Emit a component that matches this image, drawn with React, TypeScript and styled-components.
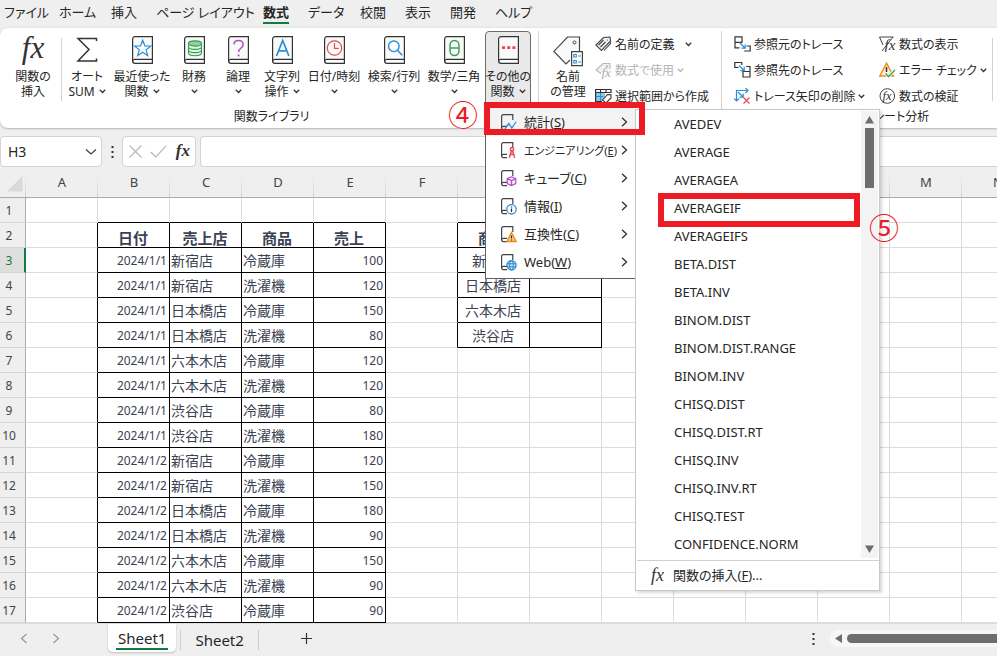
import React from "react";
import styled, { createGlobalStyle, css } from "styled-components";

const GREEN = "#107c41";
const RED = "#ed1c24";
const INK = "#262626";
const BLUE = "#2b8fd6";

const GlobalStyle = createGlobalStyle`
  *, *::before, *::after { box-sizing: border-box; }
  body {
    margin: 0;
    background: #efefef;
    color: ${INK};
    font-family: "Noto Sans", "Noto Sans CJK JP", sans-serif;
    font-size: 12px;
    line-height: 15px;
    overflow: hidden;
  }
  button, input {
    font: inherit;
    color: inherit;
    font-feature-settings: inherit;
    margin: 0;
    padding: 0;
    border: 0;
    background: none;
  }
  svg { display: block; flex: none; }
  ul { list-style: none; margin: 0; padding: 0; }
`;

const Page = styled.div`
  min-height: 100vh;
  display: flex;
  flex-direction: column;
  overflow: hidden;
  font-feature-settings: "palt";
`;

/* ---------- ribbon tabs ---------- */

const TabBar = styled.nav`
  display: flex;
  height: 27px;
  padding-left: 4px;
  font-size: 13px;
`;

const tabSizes = { s: 45, m: 52, l: 55, xl: 107 };

const Tab = styled.button<{ $size: keyof typeof tabSizes; $active?: boolean }>`
  width: ${(p) => tabSizes[p.$size]}px;
  text-align: left;
  white-space: nowrap;
  line-height: 20px;
  padding-bottom: 1px;
  span {
    display: inline-block;
    border-bottom: 2px solid transparent;
  }
  ${(p) =>
    p.$active &&
    css`
      font-weight: 700;
      span {
        border-color: ${GREEN};
      }
    `}
`;

/* ---------- ribbon ---------- */

const Ribbon = styled.section`
  display: flex;
  min-height: 101px;
  padding: 3px 0 3px 5px;
  background: #fff;
  border-top: 1px solid #e6e6e6;
  border-radius: 8px 0 0 8px;
  box-shadow: 0 1px 2px rgba(0, 0, 0, 0.25);
`;

const Group = styled.div<{ $divided?: boolean }>`
  display: flex;
  flex-direction: column;
  flex: none;
  position: relative;
  ${(p) =>
    p.$divided &&
    css`
      border-left: 1px solid #d1d1d1;
    `}
`;

const GroupBody = styled.div`
  display: flex;
  height: 78px;
`;

const GroupLabel = styled.div`
  text-align: center;
  line-height: 16px;
`;

const Divider = styled.span`
  width: 1px;
  margin: 7px 0 8px;
  background: #d1d1d1;
  flex: none;
`;

const bigSizes = { narrow: 44, mid: 50, wide: 60, fx: 56 };

const BigButton = styled.button<{ $size: keyof typeof bigSizes }>`
  width: ${(p) => bigSizes[p.$size]}px;
  flex: none;
  display: flex;
  flex-direction: column;
  align-items: center;
  padding-top: 5px;
  white-space: nowrap;
`;

const OpenButton = styled(BigButton)`
  width: 46px;
  height: 74px;
  padding-top: 4px;
  border: 1px solid #6b6b6b;
  border-radius: 4px 4px 0 0;
  background: #e9e9e9;
`;

const IconBox = styled.span`
  height: 33px;
  display: flex;
  align-items: flex-start;
`;

const LabelLine = styled.span`
  display: flex;
  align-items: center;
  justify-content: center;
  gap: 4px;
  min-height: 15px;
`;

const SmallColumn = styled.div<{ $wide?: boolean }>`
  width: ${(p) => (p.$wide ? 145 : 113)}px;
  display: flex;
  flex-direction: column;
`;

const SmallButton = styled.button<{ $tight?: boolean }>`
  height: 26px;
  display: flex;
  align-items: center;
  gap: 3px;
  white-space: nowrap;
  &:disabled {
    color: #b4b4b4;
  }
  svg:last-child:not(:first-child) {
    margin-left: ${(p) => (p.$tight ? 0 : 7)}px;
  }
`;

const Serif = styled.span<{ $size: number }>`
  font-family: "Liberation Serif", serif;
  font-style: italic;
  font-size: ${(p) => p.$size}px;
  line-height: 0.8;
  color: #333;
`;

const BoldSerif = styled(Serif)`
  font-weight: 700;
`;

const LibraryEnd = styled.span`
  width: 7px;
`;

const NamePad = styled.div`
  display: flex;
  padding: 0 2px 0 4px;
`;

const NameEnd = styled.span`
  width: 13px;
`;

const TracePad = styled.div`
  display: flex;
  padding: 0 54px 0 12px;
`;

/* ---------- flyout menus ---------- */

const MenuAnchor = styled.div`
  position: relative;
  z-index: 10;
  width: 46px;
  height: 74px;
  margin-left: 1px;
`;

const Menu = styled.div`
  position: absolute;
  top: 73px;
  left: 0;
  width: 150px;
  padding: 3px 0 2px;
  background: #fff;
  border: 1px solid #606060;
  border-right: 0;
  font-size: 13px;
`;

const MenuItem = styled.li`
  position: relative;
  height: 28px;
`;

const MenuButton = styled.button<{ $hot?: boolean; $long?: boolean }>`
  width: 100%;
  height: 28px;
  display: flex;
  align-items: center;
  padding: 0 7px 0 14px;
  gap: 6px;
  white-space: nowrap;
  background: ${(p) => (p.$hot ? "#f3f3f3" : "transparent")};
  span {
    flex: 1;
    min-width: 0;
    text-align: left;
    font-size: ${(p) => (p.$long ? 11 : 13)}px;
  }
`;

const Submenu = styled.div`
  position: absolute;
  top: 4px;
  left: 149px;
  width: 245px;
  background: #fff;
  border: 1px solid #c8c8c8;
  box-shadow: 2px 2px 3px rgba(0, 0, 0, 0.16);
`;

const ScrollArea = styled.div`
  display: flex;
  padding: 0 1px 2px 0;
  margin: 0 0 0 1px;
  border-bottom: 1px solid #cfcfcf;
  ul {
    flex: 1;
  }
`;

const FunctionButton = styled.button`
  width: 100%;
  height: 28px;
  padding-left: 37px;
  text-align: left;
`;

const VScroll = styled.div`
  width: 17px;
  margin-top: 1px;
  padding: 5px 0;
  background: #f3f3f3;
  display: flex;
  flex-direction: column;
  align-items: center;
`;

const VThumb = styled.span`
  width: 9px;
  height: 60px;
  margin: 4px 0 auto;
  background: #6e6e6e;
`;

const InsertFunction = styled.button`
  width: 100%;
  height: 29px;
  display: flex;
  align-items: center;
  padding-left: 15px;
  gap: 9px;
`;

const Frame = styled.span<{ $wide?: boolean }>`
  position: absolute;
  z-index: 3;
  inset: ${(p) => (p.$wide ? "-6px -10px 1px -2px" : "-1px 1px -5px 21px")};
  border: 6px solid ${RED};
  pointer-events: none;
`;

const Callout = styled.span<{ $right?: boolean }>`
  position: absolute;
  z-index: 3;
  ${(p) => (p.$right ? "left: 231px; top: 17px;" : "left: -39px; top: -10px;")}
  width: 32px;
  text-align: center;
  font-family: "Noto Sans CJK JP", sans-serif;
  font-size: 30px;
  line-height: 30px;
  color: ${RED};
`;

/* ---------- formula bar ---------- */

const FormulaBar = styled.div`
  display: flex;
  height: 31px;
  margin-top: 8px;
`;

const Field = styled.div`
  display: flex;
  align-items: center;
  background: #fff;
  border: 1px solid #d2d2d2;
  border-radius: 4px;
`;

const NameField = styled(Field)`
  width: 102px;
  padding: 0 4px 0 7px;
  input {
    flex: 1;
    min-width: 0;
    font-size: 14px;
    outline: 0;
  }
`;

const ToolField = styled(Field)`
  width: 74px;
  padding: 0 5px 0 6px;
  justify-content: space-between;
`;

const FormulaField = styled(Field)`
  flex: 1;
  margin-left: 4px;
  border-right: 0;
  border-radius: 4px 0 0 4px;
  input {
    flex: 1;
    padding: 0 8px;
    outline: 0;
  }
`;

const Dots = styled.span`
  width: 20px;
  display: flex;
  align-items: center;
  justify-content: center;
`;

/* ---------- grid ---------- */

const GridArea = styled.div`
  overflow: hidden;
  background: #fff;
  font-feature-settings: normal;
`;

const Sheet = styled.table`
  table-layout: fixed;
  width: 1034px;
  min-width: 100%;
  border-collapse: separate;
  border-spacing: 0;
  color: #3b4252;
  col:first-child {
    width: 26px;
  }
`;

const ColumnHead = styled.th`
  height: 31px;
  padding: 0;
  font-size: 13px;
  font-weight: 400;
  color: #444;
  background: linear-gradient(#efefef, #cfcfcf) right 0 top 8px / 1px 22px no-repeat #efefef;
  border-bottom: 1px solid #ababab;
`;

const Corner = styled(ColumnHead)`
  padding: 4px 3px 0 7px;
`;

const RowHead = styled.th<{ $active?: boolean }>`
  height: 25px;
  padding: 0 7px 0 0;
  font-size: 12px;
  font-weight: 400;
  text-align: center;
  color: #444;
  background: #efefef;
  border-right: 1px solid #ababab;
  border-bottom: 1px solid #d6d6d6;
  ${(p) =>
    p.$active &&
    css`
      color: ${GREEN};
      background: #dedede;
      border-right: 2px solid ${GREEN};
      padding-right: 6px;
    `}
`;

const Cell = styled.td<{
  $right: boolean;
  $bottom: boolean;
  $align: "left" | "right" | "center";
  $head: boolean;
}>`
  height: 25px;
  padding: 0 2px 0 1px;
  overflow: hidden;
  white-space: nowrap;
  font-size: 12px;
  border-right: 1px solid ${(p) => (p.$right ? "#000" : "#dcdcdc")};
  border-bottom: 1px solid ${(p) => (p.$bottom ? "#000" : "#dcdcdc")};
  text-align: ${(p) => p.$align};
  ${(p) =>
    p.$align !== "right" &&
    css`
      font-size: 14px;
    `}
  ${(p) =>
    p.$head &&
    css`
      font-size: 15px;
      font-weight: 700;
      padding-top: 6px;
    `}
`;

/* ---------- sheet bar ---------- */

const SheetBar = styled.footer`
  display: flex;
  align-items: flex-start;
  height: 33px;
  font-size: 15px;
  border-top: 1px solid #dcdcdc;
`;

const SheetNav = styled.div`
  display: flex;
  width: 108px;
  padding: 9px 0 0 20px;
  gap: 24px;
`;

const SheetTab = styled.button<{ $active?: boolean }>`
  line-height: 20px;
  ${(p) =>
    p.$active
      ? css`
          height: 28px;
          padding: 2px 8px 0;
          background: #fff;
          border-radius: 0 0 5px 5px;
          box-shadow: 0 1px 2px rgba(0, 0, 0, 0.2);
          span {
            display: block;
            border-bottom: 2px solid ${GREEN};
            padding: 0 2px;
          }
        `
      : css`
          height: 20px;
          margin: 6px 0 0 4px;
          padding: 0 14px;
          border: solid #cfcfcf;
          border-width: 0 1px;
        `}
`;

const AddSheet = styled.button`
  margin: 9px 0 0 42px;
`;

const HScroll = styled.div`
  display: flex;
  align-items: center;
  width: 167px;
  height: 17px;
  margin-top: 6px;
  padding-left: 5px;
  gap: 5px;
  background: #f7f7f7;
  border-radius: 8px 0 0 8px;
`;

const HThumb = styled.span`
  flex: 1;
  height: 9px;
  border-radius: 5px 0 0 5px;
  background: #6e6e6e;
`;

const MoreTabs = styled(Dots)`
  margin: 9px 7px 0 auto;
`;

/* ---------- icons ---------- */

const Chevron = ({ color = "#333" }: { color?: string }) => (
  <svg width="7" height="5" viewBox="0 0 7 5" fill="none" stroke={color} strokeWidth="1.3">
    <path d="M.8.8 3.5 3.5 6.2.8" />
  </svg>
);

const VerticalDots = () => (
  <svg width="3" height="12" viewBox="0 0 3 12" fill="#333">
    <path d="M.5 0h2v2h-2zM.5 5h2v2h-2zM.5 10h2v2h-2z" />
  </svg>
);

const Book = ({ children }: { children?: React.ReactNode }) => (
  <svg width="21" height="28" viewBox="0 0 21 28" fill="none">
    <path d="M.6 25V3A2.4 2.4 0 0 1 3 .6h17.4v26.8H3A2.4 2.4 0 0 1 .6 25Z" fill="#fafafa" stroke="#333" strokeWidth="1.2" />
    <path d="M.6 25.4A2.2 2.2 0 0 1 3 23.4h17.4" stroke="#333" strokeWidth="1.2" />
    {children}
  </svg>
);

const StarBook = () => (
  <Book>
    <path d="m10.7 4.2 2.1 5.6 6 .3-4.7 3.7 1.6 5.8-5-3.3-5 3.3 1.6-5.8-4.7-3.7 6-.3z" fill="#fff" stroke={BLUE} strokeWidth="1.2" />
  </Book>
);

const CoinsBook = () => (
  <Book>
    <g stroke="#2f9e4f" strokeWidth="1.1" fill="#e4f5e6">
      <path d="M4.5 7.500v9.500c0 1.500 3 2.700 6.500 2.700s6.500-1.200 6.500-2.700V7.500" />
      <path d="M4.500 14c0 1.500 3 2.600 6.500 2.600s6.500-1.100 6.500-2.600M4.500 10.800c0 1.500 3 2.600 6.500 2.600s6.500-1.100 6.500-2.600" />
      <ellipse cx="11" cy="7.500" rx="6.500" ry="2.600" fill="#8fd19e" />
    </g>
  </Book>
);

const QuestionBook = () => (
  <Book>
    <path d="M6 8.500c0-2.500 2-4 4.600-4s4.600 1.600 4.600 3.900c0 3.600-4.600 3.600-4.600 7.600" stroke="#b04fc0" strokeWidth="1.500" />
    <circle cx="10.600" cy="19.500" r="1.100" fill="#b04fc0" />
  </Book>
);

const LetterBook = () => (
  <Book>
    <path d="M4.500 20 10.700 4.500 16.900 20M6.600 14.800h8.200" stroke={BLUE} strokeWidth="1.700" />
  </Book>
);

const ClockBook = () => (
  <Book>
    <circle cx="10.500" cy="12" r="7.200" stroke="#e8484e" strokeWidth="1.200" fill="#fff" />
    <path d="M10.500 7v5.300h4.300" stroke="#e8484e" strokeWidth="1.200" />
  </Book>
);

const SearchBook = () => (
  <Book>
    <circle cx="9.800" cy="10.300" r="5.300" stroke={BLUE} strokeWidth="1.400" fill="#fff" />
    <path d="m13.500 14.200 4.700 5" stroke={BLUE} strokeWidth="1.500" />
  </Book>
);

const ThetaBook = () => (
  <Book>
    <rect x="6" y="4.500" width="9" height="15" rx="4.500" stroke="#2f9e4f" strokeWidth="1.400" />
    <path d="M6 12h9" stroke="#2f9e4f" strokeWidth="1.400" />
  </Book>
);

const DotsBook = () => (
  <Book>
    <path d="M4 10.200h3v2.800H4zM9.200 10.200h3v2.800h-3zM14.400 10.200h3v2.800h-3z" fill="#ef4444" />
  </Book>
);

const Sigma = () => (
  <svg width="22" height="26" viewBox="0 0 22 26" fill="none" stroke="#333" strokeWidth="1.500">
    <path d="M20.500 5V2.500H2L13 13.500 2 25h18.500V22.500" />
  </svg>
);

const NameManager = () => (
  <svg width="30" height="31" viewBox="0 0 30 31" fill="none">
    <path d="M26.500 15V1H14.500L.9 15.400 13 28l4-4" fill="#fafafa" stroke="#444" strokeWidth="1.200" />
    <circle cx="21.500" cy="6.500" r="1.500" stroke="#444" />
    <path d="M18.600 15.600h10.800v14H18.600z" fill="#fff" stroke="#444" strokeWidth="1.200" />
    <path d="M20.800 18.500h2.500V21h-2.500zM20.800 24.500h2.500V27h-2.500zM25 20h3M25 26h3" stroke={BLUE} strokeWidth="1.100" />
  </svg>
);

const TagIcon = () => (
  <svg width="17" height="16" viewBox="0 0 17 16" fill="none" stroke="#444" strokeWidth="1.100">
    <path d="M8.500 1.500 15 1l.6 4L6.500 14.500.9 9z" fill="#eee" />
    <path d="m3.500 9 5-5M5.500 11l5-5M12.500 3.800v.8M15 5.500l.5 2L9 14.500" />
  </svg>
);

const UseInFormulaIcon = () => (
  <svg width="17" height="17" viewBox="0 0 17 17" fill="none" stroke="#b8b8b8" strokeWidth="1.100">
    <path d="M6 11.500 1 8l7-6.500h7V7" fill="#f2f2f2" />
    <circle cx="12" cy="4.500" r=".7" />
    <text x="6.500" y="15" fontFamily="Liberation Serif" fontStyle="italic" fontSize="13" fill="#aaa" stroke="none">fx</text>
  </svg>
);

const SelectionIcon = () => (
  <svg width="17" height="16" viewBox="0 0 17 16" fill="none">
    <path d="M1 4h9v9H1z" fill="#8ec7ee" />
    <path d="M1 8.500h7M5.500 4v9" stroke={BLUE} />
    <path d="M16 5V1.500H.6v12H7M.6 4.500H16M5.500 1.500v3M11 1.500v3" stroke="#333" strokeWidth="1.200" />
    <path d="m7.500 12 5-5.500 3.500.3v3.200L11 15z" fill="#fff" stroke="#333" strokeWidth="1.100" />
  </svg>
);

const PrecedentsIcon = () => (
  <svg width="17" height="16" viewBox="0 0 17 16" fill="none" stroke="#333" strokeWidth="1.200">
    <path d="M1 .8h7v5.500H1zM1 6.300v5.500h4.500M12.500 10h3.700v5h-6" />
    <path d="m5.500 6.500 5.500 5.500M11.200 8.500v3.700H7.500" stroke={BLUE} />
  </svg>
);

const DependentsIcon = () => (
  <svg width="17" height="16" viewBox="0 0 17 16" fill="none" stroke="#333" strokeWidth="1.200">
    <path d="M4.500 5.500H.8v-5h7V3M9 9.500h7V15H9zM12 4.500h4v5" />
    <path d="m5 3.500 5 5M10.200 4.800v3.900H6.300" stroke={BLUE} />
  </svg>
);

const RemoveArrowsIcon = () => (
  <svg width="17" height="16" viewBox="0 0 17 16" fill="none" stroke={BLUE} strokeWidth="1.200">
    <path d="M2.500 13V2.500H14M11.500 0 14 2.500 11.500 5M0 10.500 2.500 13 5 10.500M4 4l5 5M9.200 5.500v3.700H5.500" />
    <path d="m9.500 9.500 6 6M15.500 9.500l-6 6" stroke="#e8484e" />
  </svg>
);

const ShowFormulasIcon = () => (
  <svg width="17" height="16" viewBox="0 0 17 16" fill="none" stroke="#444" strokeWidth="1">
    <path d="M.5 1h14M.5 1 4 9M14 1 3 15" />
    <text x="5.500" y="13.500" fontFamily="Liberation Serif" fontStyle="italic" fontSize="15" fill="#333" stroke="none">fx</text>
  </svg>
);

const ErrorCheckIcon = () => (
  <svg width="17" height="16" viewBox="0 0 17 16" fill="none">
    <path d="M7.500 1.200 14.500 14H.8z" fill="#fdf0d5" stroke="#ec8a1c" strokeWidth="1.400" />
    <path d="M7.500 5v5M7.500 11.500v1.200" stroke="#333" strokeWidth="1.500" />
    <path d="m6.500 11.500 3 3L16 8" stroke="#fff" strokeWidth="3" />
    <path d="m6.500 11.500 3 3L16 8" stroke="#2f9e4f" strokeWidth="1.300" />
  </svg>
);

const EvaluateIcon = () => (
  <svg width="17" height="16" viewBox="0 0 17 16" fill="none">
    <circle cx="8.300" cy="8" r="7.300" stroke="#444" />
    <text x="3.500" y="11.800" fontFamily="Liberation Serif" fontStyle="italic" fontSize="12.500" fill="#333">fx</text>
  </svg>
);

const MiniBook = ({ children }: { children?: React.ReactNode }) => (
  <svg width="18" height="18" viewBox="0 0 18 18" fill="none">
    <path d="M12.800 7V1.600H3.500c-1.200 0-1.900.7-1.900 1.900v11.200c0 1.200.7 1.900 1.900 1.900H7M1.600 15.200c0-1 .8-1.800 1.900-1.800H7" stroke="#444" strokeWidth="1.200" />
    {children}
  </svg>
);

const menuIcons: Record<string, React.ReactNode> = {
  stats: <path d="m4.800 16 4-5.500 3 4.500L16 9" stroke={BLUE} strokeWidth="1.300" />,
  engineering: (
    <g stroke="#e8484e" strokeWidth="1.500">
      <circle cx="12" cy="8.200" r="1.600" />
      <path d="m11.500 9.800-2.200 7M12.500 9.800l2.200 7M9.500 13.500h5" />
    </g>
  ),
  cube: (
    <path d="m11.500 7.800 4.300 1.800v5l-4.300 2-4.300-2v-5zM7.200 9.600l4.300 2 4.300-2M11.500 11.600v5" stroke="#b04fc0" strokeWidth="1.200" fill="#f7e9fa" />
  ),
  info: (
    <g>
      <circle cx="11.500" cy="12.300" r="4.700" stroke={BLUE} strokeWidth="1.300" fill="#fff" />
      <path d="M11.500 11.500V15M11.500 9.500v1" stroke="#333" strokeWidth="1.300" />
    </g>
  ),
  compat: (
    <g>
      <path d="m11.500 7.500 4.700 9H6.800z" fill="#fbc77d" stroke="#ec8a1c" strokeWidth="1.300" />
      <path d="M11.500 10.500v3M11.500 14.500v1" stroke="#333" strokeWidth="1.200" />
    </g>
  ),
  web: (
    <g stroke="#1f86d0">
      <circle cx="11.500" cy="12.300" r="4.600" fill="#cfe7f9" strokeWidth="1.200" />
      <path d="M7 10.800h9M7 13.800h9" />
      <ellipse cx="11.500" cy="12.300" rx="1.900" ry="4.600" />
    </g>
  ),
};

/* ---------- data ---------- */

const tabs: { label: string; size: keyof typeof tabSizes; active?: boolean }[] = [
  { label: "ファイル", size: "l" },
  { label: "ホーム", size: "m" },
  { label: "挿入", size: "s" },
  { label: "ページ レイアウト", size: "xl" },
  { label: "数式", size: "s", active: true },
  { label: "データ", size: "m" },
  { label: "校閲", size: "s" },
  { label: "表示", size: "s" },
  { label: "開発", size: "s" },
  { label: "ヘルプ", size: "m" },
];

const library: { icon: React.ReactNode; lines: [string, string]; size: keyof typeof bigSizes }[] = [
  { icon: <Sigma />, lines: ["オート", "SUM"], size: "mid" },
  { icon: <StarBook />, lines: ["最近使った", "関数"], size: "wide" },
  { icon: <CoinsBook />, lines: ["財務", ""], size: "narrow" },
  { icon: <QuestionBook />, lines: ["論理", ""], size: "narrow" },
  { icon: <LetterBook />, lines: ["文字列", "操作"], size: "narrow" },
  { icon: <ClockBook />, lines: ["日付/時刻", ""], size: "wide" },
  { icon: <SearchBook />, lines: ["検索/行列", ""], size: "wide" },
  { icon: <ThetaBook />, lines: ["数学/三角", ""], size: "wide" },
];

const categories = [
  { icon: "stats", name: "統計", key: "S" },
  { icon: "engineering", name: "エンジニアリング", key: "E" },
  { icon: "cube", name: "キューブ", key: "C" },
  { icon: "info", name: "情報", key: "I" },
  { icon: "compat", name: "互換性", key: "C" },
  { icon: "web", name: "Web", key: "W" },
];

const functions = [
  "AVEDEV", "AVERAGE", "AVERAGEA", "AVERAGEIF", "AVERAGEIFS", "BETA.DIST", "BETA.INV", "BINOM.DIST",
  "BINOM.DIST.RANGE", "BINOM.INV", "CHISQ.DIST", "CHISQ.DIST.RT", "CHISQ.INV", "CHISQ.INV.RT",
  "CHISQ.TEST", "CONFIDENCE.NORM",
];

const sales: [string, string, string, string][] = [
  ["日付", "売上店", "商品", "売上"],
  ["2024/1/1", "新宿店", "冷蔵庫", "100"],
  ["2024/1/1", "新宿店", "洗濯機", "120"],
  ["2024/1/1", "日本橋店", "冷蔵庫", "150"],
  ["2024/1/1", "日本橋店", "洗濯機", "80"],
  ["2024/1/1", "六本木店", "冷蔵庫", "120"],
  ["2024/1/1", "六本木店", "洗濯機", "120"],
  ["2024/1/1", "渋谷店", "冷蔵庫", "80"],
  ["2024/1/1", "渋谷店", "洗濯機", "180"],
  ["2024/1/2", "新宿店", "冷蔵庫", "120"],
  ["2024/1/2", "新宿店", "洗濯機", "150"],
  ["2024/1/2", "日本橋店", "冷蔵庫", "180"],
  ["2024/1/2", "日本橋店", "洗濯機", "90"],
  ["2024/1/2", "六本木店", "冷蔵庫", "150"],
  ["2024/1/2", "六本木店", "洗濯機", "90"],
  ["2024/1/2", "渋谷店", "冷蔵庫", "90"],
];
const stores = ["商品", "新宿店", "日本橋店", "六本木店", "渋谷店"];

const columns = Array.from({ length: 14 }, (_, i) => String.fromCharCode(65 + i));
const rows = Array.from({ length: 17 }, (_, i) => i + 1);

const inTable = (row: number, col: number) =>
  (row >= 2 && row <= 17 && col >= 1 && col <= 4) || (row >= 2 && row <= 6 && col >= 6 && col <= 7);

const valueAt = (row: number, col: number) => {
  if (row < 2) return "";
  if (col >= 1 && col <= 4) return sales[row - 2][col - 1];
  if (col === 6) return stores[row - 2] ?? "";
  return "";
};

const alignOf = (row: number, col: number) => {
  if (row === 2 || col === 6) return "center" as const;
  return col === 1 || col === 4 ? ("right" as const) : ("left" as const);
};

/* ---------- parts ---------- */

const FunctionMenu = () => (
  <Menu role="menu" aria-label="その他の関数">
    <ul>
      {categories.map((c, i) => (
        <MenuItem key={c.name}>
          <MenuButton role="menuitem" $hot={i === 0} $long={c.name.length > 6}>
            <MiniBook>{menuIcons[c.icon]}</MiniBook>
            <span>
              {c.name}(<u>{c.key}</u>)
            </span>
            <svg width="7" height="10" viewBox="0 0 7 10" fill="none" stroke="#333" strokeWidth="1.300">
              <path d="m1 .7 4.500 4.300L1 9.300" />
            </svg>
          </MenuButton>
          {i === 0 && (
            <>
              <Frame $wide />
              <Callout>④</Callout>
            </>
          )}
        </MenuItem>
      ))}
    </ul>
    <Submenu role="menu" aria-label="統計">
      <ScrollArea>
        <ul>
          {functions.map((name) => (
            <MenuItem key={name}>
              <FunctionButton role="menuitem">{name}</FunctionButton>
              {name === "AVERAGEIF" && (
                <>
                  <Frame />
                  <Callout $right>⑤</Callout>
                </>
              )}
            </MenuItem>
          ))}
        </ul>
        <VScroll>
          <svg width="11" height="8" viewBox="0 0 11 8" fill="#6e6e6e">
            <path d="M5.500 0 10 7.500H1z" />
          </svg>
          <VThumb />
          <svg width="11" height="8" viewBox="0 0 11 8" fill="#6e6e6e">
            <path d="M5.500 8 10 .5H1z" />
          </svg>
        </VScroll>
      </ScrollArea>
      <InsertFunction>
        <Serif $size={18}>fx</Serif>
        <span>
          関数の挿入(<u>F</u>)...
        </span>
      </InsertFunction>
    </Submenu>
  </Menu>
);

const Spreadsheet = () => (
  <Sheet>
    <colgroup>
      <col />
      {columns.map((c) => (
        <col key={c} />
      ))}
    </colgroup>
    <thead>
      <tr>
        <Corner aria-label="すべて選択">
          <svg width="16" height="16" viewBox="0 0 16 16" fill="#dadada">
            <path d="M15.500 0v15.500H0z" />
          </svg>
        </Corner>
        {columns.map((c) => (
          <ColumnHead key={c} scope="col">
            {c}
          </ColumnHead>
        ))}
      </tr>
    </thead>
    <tbody>
      {rows.map((row) => (
        <tr key={row}>
          <RowHead scope="row" $active={row === 3}>
            {row}
          </RowHead>
          {columns.map((c, col) => (
            <Cell
              key={c}
              $right={inTable(row, col) || inTable(row, col + 1)}
              $bottom={inTable(row, col) || inTable(row + 1, col)}
              $align={alignOf(row, col)}
              $head={row === 2}
            >
              {valueAt(row, col)}
            </Cell>
          ))}
        </tr>
      ))}
    </tbody>
  </Sheet>
);

export default function App() {
  return (
    <Page>
      <GlobalStyle />
      <TabBar role="tablist">
        {tabs.map((t) => (
          <Tab key={t.label} role="tab" aria-selected={!!t.active} $size={t.size} $active={t.active}>
            <span>{t.label}</span>
          </Tab>
        ))}
      </TabBar>

      <Ribbon>
        <Group>
          <GroupBody>
            <BigButton $size="fx">
              <IconBox>
                <Serif $size={31}>fx</Serif>
              </IconBox>
              <LabelLine>関数の</LabelLine>
              <LabelLine>挿入</LabelLine>
            </BigButton>
            <Divider />
            {library.map((b) => (
              <BigButton key={b.lines[0]} $size={b.size}>
                <IconBox>{b.icon}</IconBox>
                <LabelLine>{b.lines[0]}</LabelLine>
                <LabelLine>
                  {b.lines[1]}
                  <Chevron />
                </LabelLine>
              </BigButton>
            ))}
            <MenuAnchor>
              <OpenButton $size="narrow" aria-haspopup="menu" aria-expanded="true">
                <IconBox>
                  <DotsBook />
                </IconBox>
                <LabelLine>その他の</LabelLine>
                <LabelLine>
                  関数
                  <Chevron />
                </LabelLine>
              </OpenButton>
              <FunctionMenu />
            </MenuAnchor>
            <LibraryEnd />
          </GroupBody>
          <GroupLabel>関数ライブラリ</GroupLabel>
        </Group>

        <Group $divided>
          <GroupBody>
            <NamePad>
              <BigButton $size="mid">
                <IconBox>
                  <NameManager />
                </IconBox>
                <LabelLine>名前</LabelLine>
                <LabelLine>の管理</LabelLine>
              </BigButton>
            </NamePad>
            <SmallColumn>
              <SmallButton>
                <TagIcon />
                名前の定義
                <Chevron />
              </SmallButton>
              <SmallButton disabled $tight>
                <UseInFormulaIcon />
                数式で使用
                <Chevron color="#b4b4b4" />
              </SmallButton>
              <SmallButton>
                <SelectionIcon />
                選択範囲から作成
              </SmallButton>
            </SmallColumn>
            <NameEnd />
          </GroupBody>
        </Group>

        <Group $divided>
          <GroupBody>
            <TracePad>
              <SmallColumn $wide>
                <SmallButton>
                  <PrecedentsIcon />
                  参照元のトレース
                </SmallButton>
                <SmallButton>
                  <DependentsIcon />
                  参照先のトレース
                </SmallButton>
                <SmallButton $tight>
                  <RemoveArrowsIcon />
                  トレース矢印の削除
                  <Chevron />
                </SmallButton>
              </SmallColumn>
              <SmallColumn>
                <SmallButton>
                  <ShowFormulasIcon />
                  数式の表示
                </SmallButton>
                <SmallButton $tight>
                  <ErrorCheckIcon />
                  エラー チェック
                  <Chevron />
                </SmallButton>
                <SmallButton>
                  <EvaluateIcon />
                  数式の検証
                </SmallButton>
              </SmallColumn>
              <Divider />
            </TracePad>
          </GroupBody>
          <GroupLabel>ワークシート分析</GroupLabel>
        </Group>
      </Ribbon>

      <FormulaBar>
        <NameField>
          <input aria-label="名前ボックス" defaultValue="H3" />
          <svg width="12" height="8" viewBox="0 0 12 8" fill="none" stroke="#444" strokeWidth="1.300">
            <path d="m1 1.500 5 4.500 5-4.500" />
          </svg>
        </NameField>
        <Dots>
          <VerticalDots />
        </Dots>
        <ToolField>
          <button aria-label="キャンセル">
            <svg width="13" height="13" viewBox="0 0 13 13" stroke="#b8b8b8" strokeWidth="1.200">
              <path d="m.5.5 12 12M12.500.5l-12 12" />
            </svg>
          </button>
          <button aria-label="入力">
            <svg width="17" height="13" viewBox="0 0 17 13" fill="none" stroke="#b8b8b8" strokeWidth="1.200">
              <path d="m.8 7 5 5L16.200.8" />
            </svg>
          </button>
          <button aria-label="関数の挿入">
            <BoldSerif $size={17}>fx</BoldSerif>
          </button>
        </ToolField>
        <FormulaField>
          <input aria-label="数式バー" />
        </FormulaField>
      </FormulaBar>

      <GridArea>
        <Spreadsheet />
      </GridArea>

      <SheetBar>
        <SheetNav>
          <button aria-label="前のシート">
            <svg width="8" height="11" viewBox="0 0 8 11" fill="none" stroke="#9a9a9a" strokeWidth="1.300">
              <path d="m6.500 1-5 4.500 5 4.500" />
            </svg>
          </button>
          <button aria-label="次のシート">
            <svg width="8" height="11" viewBox="0 0 8 11" fill="none" stroke="#9a9a9a" strokeWidth="1.300">
              <path d="m1.500 1 5 4.500-5 4.500" />
            </svg>
          </button>
        </SheetNav>
        <SheetTab $active>
          <span>Sheet1</span>
        </SheetTab>
        <SheetTab>Sheet2</SheetTab>
        <AddSheet aria-label="新しいシート">
          <svg width="11" height="11" viewBox="0 0 11 11" stroke="#333" strokeWidth="1.200">
            <path d="M5.500 0v11M0 5.500h11" />
          </svg>
        </AddSheet>
        <MoreTabs>
          <VerticalDots />
        </MoreTabs>
        <HScroll>
          <svg width="7" height="9" viewBox="0 0 7 9" fill="#6e6e6e">
            <path d="M7 0v9L0 4.500z" />
          </svg>
          <HThumb />
        </HScroll>
      </SheetBar>
    </Page>
  );
}
